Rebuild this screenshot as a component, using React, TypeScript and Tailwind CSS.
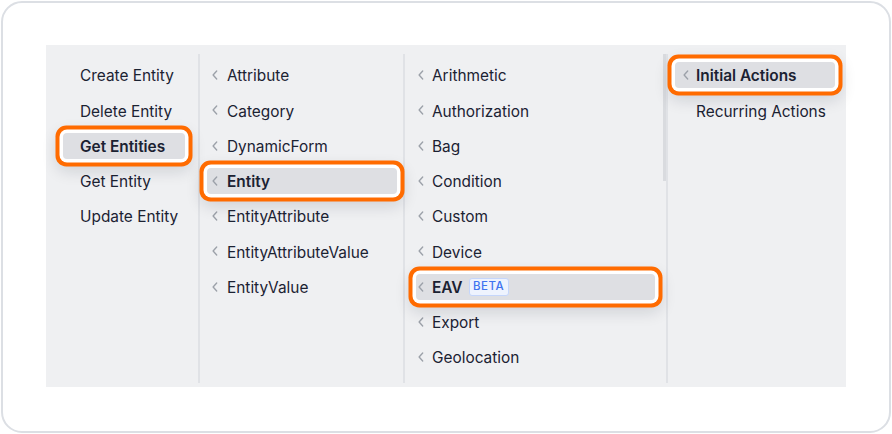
import type { ReactNode } from "react";

interface Item {
  label: string;
  chevron?: boolean;
  selected?: boolean;
  badge?: string;
}

interface ColumnProps {
  items: Item[];
  className: string;
  rowPad: string;
  chevPad: string;
  textPad: string;
  plainPad: string;
  aside?: ReactNode;
}

const ringShadow =
  "shadow-[0_0_0_3.5px_#ffffff,0_0_0_7.5px_#ff6b00,0_6px_16px_6px_rgba(15,23,42,0.14)]";

function Chevron() {
  return (
    <svg
      width="6"
      height="10"
      viewBox="0 0 6 10"
      fill="none"
      className="shrink-0"
    >
      <path
        d="M4.7 1 L1.1 5 L4.7 9"
        stroke="#9ca1a9"
        strokeWidth="1.35"
        strokeLinecap="round"
        strokeLinejoin="round"
      />
    </svg>
  );
}

function Column({ items, className, rowPad, chevPad, textPad, plainPad, aside }: ColumnProps) {
  return (
    <div className={`flex ${className}`}>
      <div className={`flex-1 pt-[3.5px] ${rowPad}`}>
        {items.map((item) => (
          <div key={item.label} className="h-[35.25px] flex items-center">
            <div
              className={`relative h-[26px] w-full flex items-center rounded-[4px] ${
                item.selected ? `z-10 bg-[#dedfe3] ${ringShadow}` : ""
              }`}
            >
              {item.chevron ? (
                <div className={`flex items-center ${chevPad}`}>
                  <Chevron />
                </div>
              ) : null}
              <span
                className={`${item.chevron ? textPad : plainPad} pt-[2px] text-[15.4px] leading-none whitespace-nowrap text-[#1b2232] ${
                  item.selected ? "font-semibold" : "font-normal"
                }`}
              >
                {item.label}
              </span>
              {item.badge ? (
                <span className="ml-[6px] h-[18px] w-[40px] flex items-center justify-center rounded-[3px] border border-[#c5d6fb] bg-[#eef3fe] text-[11.5px] leading-none tracking-[0.5px] font-medium text-[#3f73f0]">
                  {item.badge}
                </span>
              ) : null}
            </div>
          </div>
        ))}
      </div>
      {aside}
    </div>
  );
}

const actions: Item[] = [
  { label: "Create Entity" },
  { label: "Delete Entity" },
  { label: "Get Entities", selected: true },
  { label: "Get Entity" },
  { label: "Update Entity" },
];

const groups: Item[] = [
  { label: "Attribute", chevron: true },
  { label: "Category", chevron: true },
  { label: "DynamicForm", chevron: true },
  { label: "Entity", chevron: true, selected: true },
  { label: "EntityAttribute", chevron: true },
  { label: "EntityAttributeValue", chevron: true },
  { label: "EntityValue", chevron: true },
];

const categories: Item[] = [
  { label: "Arithmetic", chevron: true },
  { label: "Authorization", chevron: true },
  { label: "Bag", chevron: true },
  { label: "Condition", chevron: true },
  { label: "Custom", chevron: true },
  { label: "Device", chevron: true },
  { label: "EAV", chevron: true, selected: true, badge: "BETA" },
  { label: "Export", chevron: true },
  { label: "Geolocation", chevron: true },
];

const roots: Item[] = [
  { label: "Initial Actions", chevron: true, selected: true },
  { label: "Recurring Actions" },
];

export default function App() {
  return (
    <div className="w-[892px] h-[434px] bg-white p-px font-['Inter','Noto_Sans',sans-serif]">
      <div className="h-full rounded-[21px] border-2 border-[#dcdfe4] bg-white pl-[43px] pr-[43px] pt-[42px] pb-[44px]">
        <div className="h-full flex bg-[#eff0f2] pt-[9px] pb-[4px]">
          <Column
            items={actions}
            className="w-[154px] border-r-2 border-[#e0e2e6]"
            rowPad="pl-[17px] pr-[13px]"
            chevPad=""
            textPad=""
            plainPad="pl-[17px]"
          />
          <Column
            items={groups}
            className="w-[205px] border-r-2 border-[#e0e2e6]"
            rowPad="pl-[7px] pr-[6px]"
            chevPad="pl-[4.5px]"
            textPad="pl-[9.5px]"
            plainPad="pl-[20px]"
          />
          <Column
            items={categories}
            className="w-[263px] border-r-2 border-[#e0e2e6]"
            rowPad="pl-[11px] pr-[8px]"
            chevPad="pl-[1.5px]"
            textPad="pl-[8.5px]"
            plainPad="pl-[16px]"
            aside={<div className="w-[3px] h-[127px] bg-[#d9dbdf]" />}
          />
          <Column
            items={roots}
            className="flex-1"
            rowPad="pl-[7px] pr-[11px]"
            chevPad="pl-[7.5px]"
            textPad="pl-[7.5px]"
            plainPad="pl-[21px]"
          />
        </div>
      </div>
    </div>
  );
}
